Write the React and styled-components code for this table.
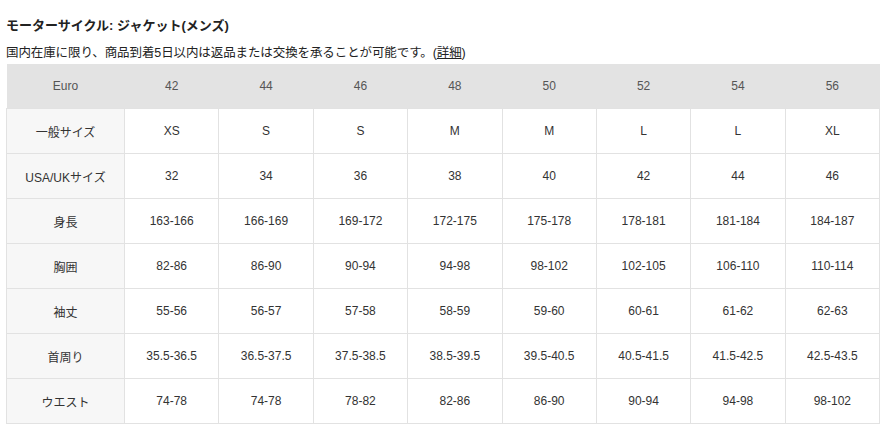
import React from "react";
import styled, { createGlobalStyle } from "styled-components";

const Global = createGlobalStyle`
  html, body { margin: 0; padding: 0; background: #fff; }
  body { font-family: "Liberation Sans", Arial, "Noto Sans CJK JP", sans-serif; color: #333; }
`;

const Page = styled.div`
  padding: 16px 2px 0 6px;
`;

const Title = styled.h2`
  margin: 0;
  font-size: 13px;
  font-weight: bold;
  line-height: 20px;
  color: #222;
  font-family: "Liberation Sans", "Noto Sans CJK JP", sans-serif;
`;

const Note = styled.p`
  margin: 8px 0 2px;
  font-size: 12.5px;
  line-height: 18px;
  color: #222;
  font-family: "Liberation Sans", "Noto Sans CJK JP", sans-serif;
  letter-spacing: -0.1px;
`;

const Link = styled.a`
  color: #222;
  text-decoration: underline;
`;

const Table = styled.table`
  width: 874px;
  border-collapse: collapse;
  table-layout: fixed;
  font-size: 12px;
`;

const HeadCell = styled.th`
  height: 44px;
  padding: 0;
  background: #e3e3e3;
  color: #555;
  font-weight: normal;
  text-align: center;
  border: none;
  width: ${(p) => (p.$first ? "118px" : "auto")};
`;

const LabelCell = styled.td`
  height: 44px;
  padding: 0;
  background: #f7f7f7;
  border: 1px solid #e2e2e2;
  text-align: center;
  color: #333;
  font-family: "Liberation Sans", "Noto Sans CJK JP", sans-serif;
`;

const Cell = styled.td`
  height: 44px;
  padding: 0;
  background: #fff;
  border: 1px solid #e2e2e2;
  text-align: center;
  color: #333;
`;

const head = ["42", "44", "46", "48", "50", "52", "54", "56"];
const rows = [
  ["一般サイズ", ["XS", "S", "S", "M", "M", "L", "L", "XL"]],
  ["USA/UKサイズ", ["32", "34", "36", "38", "40", "42", "44", "46"]],
  ["身長", ["163-166", "166-169", "169-172", "172-175", "175-178", "178-181", "181-184", "184-187"]],
  ["胸囲", ["82-86", "86-90", "90-94", "94-98", "98-102", "102-105", "106-110", "110-114"]],
  ["袖丈", ["55-56", "56-57", "57-58", "58-59", "59-60", "60-61", "61-62", "62-63"]],
  ["首周り", ["35.5-36.5", "36.5-37.5", "37.5-38.5", "38.5-39.5", "39.5-40.5", "40.5-41.5", "41.5-42.5", "42.5-43.5"]],
  ["ウエスト", ["74-78", "74-78", "78-82", "82-86", "86-90", "90-94", "94-98", "98-102"]],
];

export default function App() {
  return (
    <Page>
      <Global />
      <Title>モーターサイクル: ジャケット(メンズ)</Title>
      <Note>
        国内在庫に限り、商品到着5日以内は返品または交換を承ることが可能です。(<Link href="#">詳細</Link>)
      </Note>
      <Table>
        <thead>
          <tr>
            <HeadCell $first>Euro</HeadCell>
            {head.map((h, i) => (
              <HeadCell key={i}>{h}</HeadCell>
            ))}
          </tr>
        </thead>
        <tbody>
          {rows.map(([label, vals]) => (
            <tr key={label}>
              <LabelCell>{label}</LabelCell>
              {vals.map((v, i) => (
                <Cell key={i}>{v}</Cell>
              ))}
            </tr>
          ))}
        </tbody>
      </Table>
    </Page>
  );
}
